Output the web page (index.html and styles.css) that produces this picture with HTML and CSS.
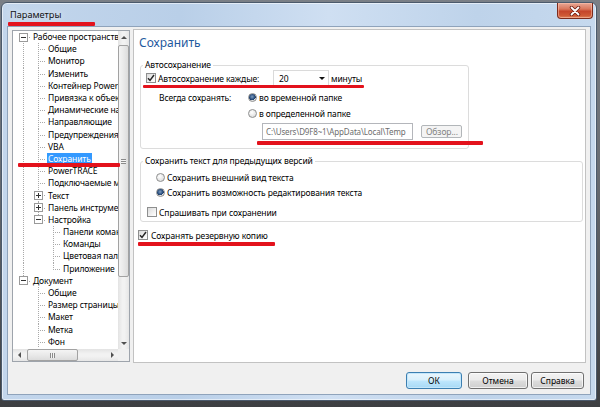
FILE: index.html
```html
<!DOCTYPE html>
<html lang="ru">
<head>
<meta charset="utf-8">
<title>Параметры</title>
<link rel="stylesheet" href="styles.css">
</head>
<body>
<div class="window">
  <div class="titlebar">
    <span class="title">Параметры</span>
    <button class="close" aria-label="Закрыть"><svg width="12" height="10" viewBox="0 0 12 10"><path d="M2.5 1.5 L9.5 8.5 M9.5 1.5 L2.5 8.5" stroke="#6b1c10" stroke-width="3.4" stroke-linecap="round"/><path d="M2.5 1.5 L9.5 8.5 M9.5 1.5 L2.5 8.5" stroke="#ffffff" stroke-width="1.8" stroke-linecap="round"/></svg></button>
  </div>
  <div class="client">
    <div class="main">
      <div class="tree">
        <ul class="tree-list">
          <li class="row"><span class="c c-f"><span class="box"></span></span><span class="lbl">Рабочее пространство</span></li>
          <li class="row"><span class="c c-v"></span><span class="c c-t"></span><span class="lbl">Общие</span></li>
          <li class="row"><span class="c c-v"></span><span class="c c-t"></span><span class="lbl">Монитор</span></li>
          <li class="row"><span class="c c-v"></span><span class="c c-t"></span><span class="lbl">Изменить</span></li>
          <li class="row"><span class="c c-v"></span><span class="c c-t"></span><span class="lbl">Контейнер PowerClip</span></li>
          <li class="row"><span class="c c-v"></span><span class="c c-t"></span><span class="lbl">Привязка к объектам</span></li>
          <li class="row"><span class="c c-v"></span><span class="c c-t"></span><span class="lbl">Динамические направляющие</span></li>
          <li class="row"><span class="c c-v"></span><span class="c c-t"></span><span class="lbl">Направляющие</span></li>
          <li class="row"><span class="c c-v"></span><span class="c c-t"></span><span class="lbl">Предупреждения</span></li>
          <li class="row"><span class="c c-v"></span><span class="c c-t"></span><span class="lbl">VBA</span></li>
          <li class="row"><span class="c c-v"></span><span class="c c-t"></span><span class="lbl sel">Сохранить</span></li>
          <li class="row"><span class="c c-v"></span><span class="c c-t"></span><span class="lbl">PowerTRACE</span></li>
          <li class="row"><span class="c c-v"></span><span class="c c-t"></span><span class="lbl">Подключаемые модули</span></li>
          <li class="row"><span class="c c-v"></span><span class="c c-t"><span class="box plus"></span></span><span class="lbl">Текст</span></li>
          <li class="row"><span class="c c-v"></span><span class="c c-t"><span class="box plus"></span></span><span class="lbl">Панель инструментов</span></li>
          <li class="row"><span class="c c-v"></span><span class="c c-l"><span class="box"></span></span><span class="lbl">Настройка</span></li>
          <li class="row"><span class="c c-v"></span><span class="c"></span><span class="c c-t"></span><span class="lbl">Панели команд</span></li>
          <li class="row"><span class="c c-v"></span><span class="c"></span><span class="c c-t"></span><span class="lbl">Команды</span></li>
          <li class="row"><span class="c c-v"></span><span class="c"></span><span class="c c-t"></span><span class="lbl">Цветовая палитра</span></li>
          <li class="row"><span class="c c-v"></span><span class="c"></span><span class="c c-l"></span><span class="lbl">Приложение</span></li>
          <li class="row"><span class="c c-l"><span class="box"></span></span><span class="lbl">Документ</span></li>
          <li class="row"><span class="c"></span><span class="c c-t"></span><span class="lbl">Общие</span></li>
          <li class="row"><span class="c"></span><span class="c c-t"></span><span class="lbl">Размер страницы</span></li>
          <li class="row"><span class="c"></span><span class="c c-t"></span><span class="lbl">Макет</span></li>
          <li class="row"><span class="c"></span><span class="c c-t"></span><span class="lbl">Метка</span></li>
          <li class="row"><span class="c"></span><span class="c c-t"></span><span class="lbl">Фон</span></li>
        </ul>
        <div class="vscroll">
          <span class="sb-arrow"><span class="tri tri-up"></span></span>
          <div class="vtrack"><div class="vthumb"><span class="grip-h"></span></div></div>
          <span class="sb-arrow"><span class="tri tri-down"></span></span>
        </div>
        <div class="hscroll">
          <span class="sb-arrow"><span class="tri tri-left"></span></span>
          <div class="htrack"><div class="hthumb"><span class="grip-v"></span></div></div>
          <span class="sb-arrow"><span class="tri tri-right"></span></span>
        </div>
        <div class="corner"></div>
      </div>

      <div class="panel">
        <h1 class="heading">Сохранить</h1>

        <fieldset class="group g-auto">
          <legend>Автосохранение</legend>
          <div class="r r-auto">
            <span class="chk-line"><span class="cb"><svg width="8" height="8" viewBox="0 0 8 8"><path d="M1 4.2 L3 6.4 L7 1" fill="none" stroke="#262626" stroke-width="1.5"/></svg></span><span>Автосохранение каждые:</span></span>
            <span class="combo"><span>20</span><span class="combo-arrow"></span></span>
            <span class="unit">минуты</span>
          </div>
          <div class="r r-always">
            <span class="always-lbl">Всегда сохранять:</span>
            <span class="rb on"></span><span>во временной папке</span>
          </div>
          <div class="r r-other">
            <span class="rb"></span><span>в определенной папке</span>
          </div>
          <div class="r r-path">
            <span class="path">C:\Users\D9F8~1\AppData\Local\Temp</span>
            <span class="browse">Обзор...</span>
          </div>
        </fieldset>

        <fieldset class="group g-text">
          <legend>Сохранить текст для предыдущих версий</legend>
          <div class="r r-look">
            <span class="rb"></span><span>Сохранить внешний вид текста</span>
          </div>
          <div class="r r-edit">
            <span class="rb on"></span><span>Сохранить возможность редактирования текста</span>
          </div>
          <div class="r r-ask">
            <span class="cb"></span><span>Спрашивать при сохранении</span>
          </div>
        </fieldset>

        <div class="r r-backup">
          <span class="cb"><svg width="8" height="8" viewBox="0 0 8 8"><path d="M1 4.2 L3 6.4 L7 1" fill="none" stroke="#262626" stroke-width="1.5"/></svg></span><span>Сохранять резервную копию</span>
        </div>
      </div>
    </div>
    <div class="footer">
      <button class="btn btn-ok">ОК</button>
      <button class="btn btn-cancel">Отмена</button>
      <button class="btn btn-help">Справка</button>
    </div>
  </div>
</div>

<div class="marks" aria-hidden="true">
  <span class="mark m-title"></span>
  <span class="mark m-tree"></span>
  <span class="mark m-auto"></span>
  <span class="mark m-path"></span>
  <span class="mark m-backup"></span>
</div>
</body>
</html>
```

FILE: styles.css
```css
* { box-sizing: border-box; }

html, body {
  margin: 0;
  padding: 0;
}

body {
  width: 600px;
  height: 407px;
  overflow: hidden;
  position: relative;
  background: linear-gradient(#7a7f86 0, #6a6e74 40%, #3d3f42 100%);
  font-family: "Noto Sans", "Liberation Sans", sans-serif;
  font-size: 8.5px;
  letter-spacing: -0.1px;
  color: #000;
}

/* ---------- window frame ---------- */
.window {
  width: 596px;
  height: 399px;
  margin: 2px 0 0 1px;
  border: 1px solid #4b5a6c;
  border-radius: 6px 6px 3px 3px;
  padding: 0 5px 5px 5px;
  display: flex;
  flex-direction: column;
  background: linear-gradient(to right, #c3d6ec 0, #b9cfe8 30%, #cfdff2 55%, #bed3ea 80%, #c6d9ee 100%);
  box-shadow: inset 0 0 0 1px rgba(255,255,255,0.55);
}

.titlebar {
  height: 23px;
  margin: 0 -5px;
  padding: 0 3px 0 8px;
  display: flex;
  justify-content: space-between;
  align-items: flex-start;
}

.title {
  font-size: 9.2px;
  line-height: 23px;
  letter-spacing: 0;
  color: #111;
  text-shadow: 0 0 6px rgba(255,255,255,0.9);
}

.close {
  width: 36px;
  height: 16px;
  padding: 0;
  margin: 0;
  border: 1px solid #7c2b1c;
  border-top: none;
  border-radius: 0 0 4px 4px;
  background: linear-gradient(#e8a896 0, #d9775c 40%, #c5452a 55%, #cf5a36 85%, #e0895f 100%);
  display: flex;
  align-items: center;
  justify-content: center;
  box-shadow: inset 0 0 0 1px rgba(255,200,180,0.5);
}

.close svg { display: block; }

.client {
  flex: 1;
  display: flex;
  flex-direction: column;
  background: #f0f0f0;
  border: 1px solid #8fa3bb;
}

.main {
  height: 336px;
  padding: 2px 4px 0 4px;
  display: flex;
  align-items: flex-start;
  gap: 3px;
}

/* ---------- tree ---------- */
.tree {
  width: 118px;
  height: 332px;
  margin-top: 1px;
  border: 1px solid #9ea4ac;
  background: #fff;
  display: grid;
  grid-template-columns: 1fr 11px;
  grid-template-rows: 1fr 12px;
}

.tree-list {
  list-style: none;
  margin: 0;
  padding: 0 0 0 3px;
  overflow: hidden;
  white-space: nowrap;
}

.row {
  height: 12.2px;
  display: flex;
  align-items: center;
  line-height: 12px;
}

.c {
  flex: none;
  width: 15px;
  height: 100%;
  display: flex;
  align-items: center;
  justify-content: center;
  background-repeat: no-repeat;
}

.c-v {
  background-image: repeating-linear-gradient(#a9a9a9 0 1px, transparent 1px 2px);
  background-size: 1px 100%;
  background-position: 7px 0;
}

.c-t {
  background-image:
    repeating-linear-gradient(to right, #a9a9a9 0 1px, transparent 1px 2px),
    repeating-linear-gradient(#a9a9a9 0 1px, transparent 1px 2px);
  background-size: 8px 1px, 1px 100%;
  background-position: 7px 6px, 7px 0;
}

.c-l {
  background-image:
    repeating-linear-gradient(to right, #a9a9a9 0 1px, transparent 1px 2px),
    repeating-linear-gradient(#a9a9a9 0 1px, transparent 1px 2px);
  background-size: 8px 1px, 1px 6px;
  background-position: 7px 6px, 7px 0;
}

.c-f {
  background-image:
    repeating-linear-gradient(to right, #a9a9a9 0 1px, transparent 1px 2px),
    repeating-linear-gradient(#a9a9a9 0 1px, transparent 1px 2px);
  background-size: 8px 1px, 1px 6px;
  background-position: 7px 6px, 7px 100%;
}

.box {
  width: 9px;
  height: 9px;
  border: 1px solid #9a9a9a;
  background:
    linear-gradient(#333, #333) center / 5px 1px no-repeat,
    #fff;
}

.box.plus {
  background:
    linear-gradient(#333, #333) center / 5px 1px no-repeat,
    linear-gradient(#333, #333) center / 1px 5px no-repeat,
    #fff;
}

.lbl {
  margin-left: 1px;
  padding: 0 1px;
}

.lbl.sel {
  background: #3399ff;
  color: #fff;
  line-height: 11px;
}

/* scrollbars */
.vscroll {
  display: flex;
  flex-direction: column;
  background: linear-gradient(to right, #e3e3e3, #f2f2f2 40%, #f2f2f2 60%, #e6e6e6);
}

.hscroll {
  display: flex;
  background: linear-gradient(#e3e3e3, #f2f2f2 40%, #f2f2f2 60%, #e6e6e6);
}

.corner { background: #f0f0f0; }

.sb-arrow {
  flex: none;
  width: 11px;
  height: 12px;
  display: flex;
  align-items: center;
  justify-content: center;
}

.hscroll .sb-arrow { width: 12px; height: 12px; }

.tri { width: 0; height: 0; }
.tri-up { border-left: 3px solid transparent; border-right: 3px solid transparent; border-bottom: 3px solid #505050; }
.tri-down { border-left: 3px solid transparent; border-right: 3px solid transparent; border-top: 3px solid #505050; }
.tri-left { border-top: 3px solid transparent; border-bottom: 3px solid transparent; border-right: 3px solid #505050; }
.tri-right { border-top: 3px solid transparent; border-bottom: 3px solid transparent; border-left: 3px solid #505050; }

.vtrack {
  flex: 1;
  padding-top: 2px;
}

.vthumb {
  height: 232px;
  border: 1px solid #a2a2a2;
  border-radius: 2px;
  background: linear-gradient(to right, #f4f4f4, #e9e9e9 50%, #dcdcdc);
  display: flex;
  align-items: center;
  justify-content: center;
}

.grip-h {
  width: 5px;
  height: 5px;
  background: repeating-linear-gradient(#8a8a8a 0 1px, #f4f4f4 1px 2px);
}

.htrack {
  flex: 1;
  padding-left: 2px;
}

.hthumb {
  width: 51px;
  height: 100%;
  border: 1px solid #a2a2a2;
  border-radius: 2px;
  background: linear-gradient(#f4f4f4, #e9e9e9 50%, #dcdcdc);
  display: flex;
  align-items: center;
  justify-content: center;
}

.grip-v {
  width: 5px;
  height: 5px;
  background: repeating-linear-gradient(to right, #8a8a8a 0 1px, #f4f4f4 1px 2px);
}

/* ---------- content panel ---------- */
.panel {
  width: 453px;
  height: 334px;
  border: 1px solid #c2c2c2;
  background: #fff;
  padding: 5px 2px 0 5px;
}

.heading {
  margin: 0;
  font-size: 12px;
  line-height: 16px;
  font-weight: normal;
  letter-spacing: 0;
  color: #1f5a9e;
}

.group {
  margin: 0 0 0 1px;
  padding: 0;
  border: 1px solid #dcdcdc;
  border-radius: 3px;
  min-inline-size: 0;
}

.group legend {
  margin-left: 2px;
  padding: 0 2px;
  line-height: 10px;
  font-size: 8.5px;
}

.g-auto {
  width: 329px;
  margin-top: 9px;
  padding-bottom: 8px;
}

.g-text {
  margin-top: 7px;
  padding: 4px 0 2px 0;
}

.r {
  display: flex;
  align-items: center;
  white-space: nowrap;
}

.r-auto {
  height: 16px;
  padding-left: 5px;
  display: grid;
  grid-template-columns: 125px 56px auto;
  column-gap: 2px;
}

.chk-line {
  display: flex;
  align-items: center;
  gap: 2px;
}

.combo {
  height: 16px;
  border: 1px solid #dadada;
  background: #fff;
  display: flex;
  align-items: center;
  justify-content: space-between;
  padding: 0 3px 0 5px;
}

.combo-arrow {
  width: 0;
  height: 0;
  border-left: 3px solid transparent;
  border-right: 3px solid transparent;
  border-top: 3px solid #111;
}

.r-always {
  height: 16px;
  margin-top: 3px;
  padding-left: 18px;
  gap: 2px;
}

.always-lbl {
  width: 87px;
}

.r-other {
  height: 16px;
  padding-left: 107px;
  gap: 2px;
}

.r-path {
  margin-top: 2px;
  padding-left: 121px;
  gap: 8px;
}

.path {
  width: 151px;
  height: 17px;
  border: 1px solid #b4b6bb;
  background: #fff;
  color: #6d6d6d;
  font-size: 8px;
  letter-spacing: -0.15px;
  line-height: 15px;
  padding-left: 3px;
  overflow: hidden;
}

.browse {
  width: 41px;
  height: 13px;
  border: 1px solid #b2b6b9;
  border-radius: 2px;
  background: #f4f4f4;
  color: #838383;
  line-height: 11px;
  padding-left: 4px;
}

.r-look {
  height: 14px;
  padding-left: 15px;
  gap: 2px;
}

.r-edit {
  height: 14px;
  margin-top: 1px;
  padding-left: 15px;
  gap: 2px;
}

.r-ask {
  height: 14px;
  margin-top: 6px;
  padding-left: 6px;
  gap: 2px;
}

.r-backup {
  height: 14px;
  margin: 6px 0 0 -1px;
  gap: 3px;
}

/* checkbox / radio */
.cb {
  flex: none;
  width: 10px;
  height: 10px;
  border: 1px solid #8e8f8f;
  background: linear-gradient(135deg, #dadada, #f6f6f6 70%, #fff);
  display: flex;
  align-items: center;
  justify-content: center;
}

.cb svg { display: block; }

.rb {
  flex: none;
  width: 9px;
  height: 9px;
  border: 1px solid #8e8f8f;
  border-radius: 50%;
  background: radial-gradient(circle at 40% 35%, #fff, #e6e6e6 60%, #d0d0d0);
  display: flex;
  align-items: center;
  justify-content: center;
}

.rb.on {
  background: radial-gradient(circle at 45% 40%, #7f9ec0 0, #2a4f80 45%, #1c3a63 60%, #e6e6e6 62%, #d3d3d3 100%);
}

/* ---------- footer ---------- */
.footer {
  flex: 1;
  display: flex;
  justify-content: flex-end;
  align-items: flex-start;
  padding: 9px 6px 0 0;
}

.btn {
  height: 17px;
  margin: 0;
  padding: 0;
  font-family: "Noto Sans", "Liberation Sans", sans-serif;
  font-size: 8.5px;
  color: #000;
  border: 1px solid #707070;
  border-radius: 3px;
  background: linear-gradient(#f3f3f3 0, #ebebeb 48%, #dddddd 52%, #cfcfcf 100%);
  box-shadow: inset 0 0 0 1px rgba(255,255,255,0.7);
}

.btn-ok {
  width: 56px;
  border-color: #3c7fb1;
  background: linear-gradient(#eaf6fd 0, #d9f0fc 48%, #bee6fd 52%, #a7d9f5 100%);
  box-shadow: inset 0 0 0 1px #c4e7fb;
}

.btn-cancel { width: 60px; margin-left: 6px; }
.btn-help { width: 53px; margin-left: 3px; }

/* ---------- red annotation marks ---------- */
.marks .mark {
  position: absolute;
  background: #e3121c;
  border-radius: 1px;
}

.m-title { left: 8px; top: 22px; width: 87px; height: 4px; }
.m-tree { left: 18px; top: 163px; width: 102px; height: 4px; }
.m-auto { left: 143px; top: 85px; width: 221px; height: 3px; }
.m-path { left: 257px; top: 141px; width: 226px; height: 4px; }
.m-backup { left: 138px; top: 242px; width: 137px; height: 4px; }
```
